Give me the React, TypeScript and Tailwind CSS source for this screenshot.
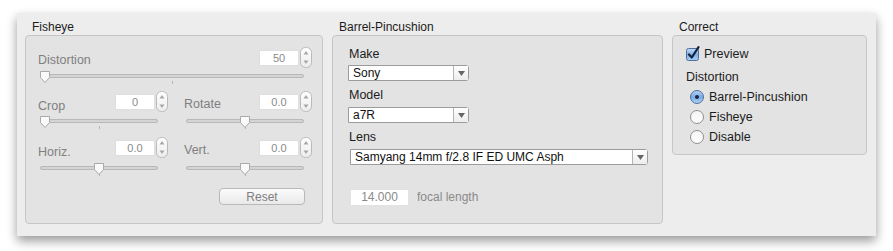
import type { ReactNode } from 'react'

const FONT = { fontFamily: '"Liberation Sans", Arial, sans-serif' }

function Group({ title, className, children }: { title: string; className: string; children: ReactNode }) {
  return (
    <div className="flex flex-col">
      <div className="h-[14px] pl-[7px] text-[12px] leading-[14px] text-[#1c1c1c]">{title}</div>
      <div className={`mt-[1px] rounded-[4px] border border-[#c6c6c6] bg-[#e3e3e3] ${className}`}>{children}</div>
    </div>
  )
}

function Stepper() {
  return (
    <svg width="12" height="21" viewBox="0 0 12 21" className="block">
      <defs>
        <linearGradient id="stp" x1="0" y1="0" x2="0" y2="1">
          <stop offset="0" stopColor="#ffffff" />
          <stop offset="1" stopColor="#ececec" />
        </linearGradient>
      </defs>
      <rect x="0.5" y="0.5" width="11" height="20" rx="5" fill="url(#stp)" stroke="#b9b9b9" />
      <path d="M3.5 7.5 L6 4 L8.5 7.5 Z" fill="#a8a8a8" />
      <path d="M3.5 13.5 L6 17 L8.5 13.5 Z" fill="#a8a8a8" />
    </svg>
  )
}

function NumField({ value }: { value: string }) {
  return (
    <div className="flex items-center gap-[1px]">
      <div className="h-[16px] w-[40px] border border-[#dedede] bg-white text-center text-[11px] leading-[14px] text-[#8a8a8a]">
        {value}
      </div>
      <Stepper />
    </div>
  )
}

function Knob() {
  return (
    <svg width="12" height="14" viewBox="0 0 12 14" className="block">
      <path d="M1.5 1.5 H10.5 V7.5 L6 12.5 L1.5 7.5 Z" fill="#fafafa" stroke="#a9a9a9" strokeLinejoin="round" />
    </svg>
  )
}

function Slider({ width, knob }: { width: number; knob: 'left' | 'center' }) {
  return (
    <div className="relative h-[16px]" style={{ width }}>
      <div className="absolute left-0 right-0 top-[4px] h-[4px] rounded-full border border-[#b8b8b8] bg-[#d4d4d4]" />
      <div className="absolute top-[11px] h-[3px] w-[1px] bg-[#b5b5b5]" style={{ left: Math.round(width / 2) }} />
      <div
        className="absolute top-0"
        style={{ left: knob === 'left' ? -1 : Math.round(width / 2) - 6 }}
      >
        <Knob />
      </div>
    </div>
  )
}

function Select({ value, width }: { value: string; width: number }) {
  return (
    <div
      className="flex h-[16px] items-stretch rounded-r-[3px] border border-[#9c9c9c] bg-white"
      style={{ width }}
    >
      <div className="flex-1 pl-[4px] text-[12px] leading-[14px] text-[#111]">{value}</div>
      <div className="flex w-[15px] items-center justify-center border-l border-[#b4b4b4] bg-gradient-to-b from-[#ffffff] to-[#ededed]">
        <svg width="7" height="5" viewBox="0 0 7 5">
          <path d="M0 0 H7 L3.5 5 Z" fill="#666" />
        </svg>
      </div>
    </div>
  )
}

function Checkbox() {
  return (
    <svg width="15" height="15" viewBox="0 0 15 15" className="block">
      <defs>
        <linearGradient id="cbx" x1="0" y1="0" x2="0" y2="1">
          <stop offset="0" stopColor="#c6dcf6" />
          <stop offset="0.5" stopColor="#7fb0e8" />
          <stop offset="1" stopColor="#a7cdf5" />
        </linearGradient>
      </defs>
      <rect x="0.5" y="2.5" width="12" height="12" rx="2" fill="url(#cbx)" stroke="#4f6f9c" />
      <path d="M3 8.5 L5.8 11.5 L12.5 1.2" fill="none" stroke="#15233f" strokeWidth="2.2" strokeLinecap="round" strokeLinejoin="round" />
    </svg>
  )
}

function Radio({ on }: { on: boolean }) {
  return (
    <svg width="14" height="14" viewBox="0 0 14 14" className="block">
      <defs>
        <linearGradient id="rOn" x1="0" y1="0" x2="0" y2="1">
          <stop offset="0" stopColor="#b9d4f4" />
          <stop offset="0.5" stopColor="#78abe6" />
          <stop offset="1" stopColor="#b2d3f7" />
        </linearGradient>
        <linearGradient id="rOff" x1="0" y1="0" x2="0" y2="1">
          <stop offset="0" stopColor="#f4f4f4" />
          <stop offset="1" stopColor="#ffffff" />
        </linearGradient>
      </defs>
      <circle cx="7" cy="7" r="6.5" fill={on ? 'url(#rOn)' : 'url(#rOff)'} stroke={on ? '#52709c' : '#8f8f8f'} />
      {on && <circle cx="7" cy="7" r="2" fill="#1b2540" />}
    </svg>
  )
}

export default function App() {
  return (
    <div className="h-[251px] w-[893px] bg-white pl-[17px] pt-[13px]" style={FONT}>
      <div className="flex h-[223px] w-[859px] gap-[9px] bg-[#ededed] pl-[8px] pt-[7px] shadow-[0_5px_10px_rgba(0,0,0,0.4)]">
        {/* Fisheye – disabled */}
        <Group title="Fisheye" className="h-[189px] w-[298px] pl-[12px] pt-[11px]">
          <div className="flex h-[21px] w-[274px] items-center justify-between">
            <span className="mt-[5px] text-[12.5px] text-[#7f7f7f]">Distortion</span>
            <NumField value="50" />
          </div>
          <div className="ml-[2px] mt-[2px]">
            <Slider width={264} knob="left" />
          </div>
          <div className="mt-[5px] flex gap-[16px]">
            <div className="flex w-[130px] flex-col">
              <div className="flex h-[21px] items-center justify-between">
                <span className="mt-[9px] text-[12.5px] text-[#7f7f7f]">Crop</span>
                <NumField value="0" />
              </div>
              <div className="ml-[2px] mt-[3px]">
                <Slider width={118} knob="left" />
              </div>
              <div className="mt-[6px] flex h-[21px] items-center justify-between">
                <span className="mt-[9px] text-[12.5px] text-[#7f7f7f]">Horiz.</span>
                <NumField value="0.0" />
              </div>
              <div className="ml-[2px] mt-[4px]">
                <Slider width={118} knob="center" />
              </div>
            </div>
            <div className="flex w-[128px] flex-col">
              <div className="flex h-[21px] items-center justify-between">
                <span className="mt-[6px] text-[12.5px] text-[#7f7f7f]">Rotate</span>
                <NumField value="0.0" />
              </div>
              <div className="ml-[2px] mt-[3px]">
                <Slider width={118} knob="center" />
              </div>
              <div className="mt-[6px] flex h-[21px] items-center justify-between">
                <span className="mt-[6px] text-[12.5px] text-[#7f7f7f]">Vert.</span>
                <NumField value="0.0" />
              </div>
              <div className="ml-[2px] mt-[4px]">
                <Slider width={118} knob="center" />
              </div>
              <div className="ml-[35px] mt-[10px] flex h-[17px] w-[86px] items-center justify-center rounded-[4px] border border-[#b9b9b9] bg-gradient-to-b from-[#fbfbfb] to-[#e9e9e9] text-[12px] text-[#808080]">
                Reset
              </div>
            </div>
          </div>
        </Group>

        {/* Barrel-Pincushion */}
        <Group title="Barrel-Pincushion" className="h-[189px] w-[331px] pl-[15px] pt-[11px]">
          <div className="h-[14px] pl-[1px] text-[12.5px] leading-[14px] text-[#1c1c1c]">Make</div>
          <div className="mt-[4px]">
            <Select value="Sony" width={121} />
          </div>
          <div className="mt-[7px] h-[14px] pl-[1px] text-[12.5px] leading-[14px] text-[#1c1c1c]">Model</div>
          <div className="mt-[5px]">
            <Select value="a7R" width={121} />
          </div>
          <div className="mt-[7px] h-[14px] pl-[1px] text-[12.5px] leading-[14px] text-[#1c1c1c]">Lens</div>
          <div className="ml-[2px] mt-[5px]">
            <Select value="Samyang 14mm f/2.8 IF ED UMC Asph" width={298} />
          </div>
          <div className="ml-[2px] mt-[23px] flex items-center gap-[8px]">
            <div className="h-[17px] w-[59px] border border-[#e2e2e2] bg-white text-center text-[12px] leading-[15px] text-[#8a8a8a]">
              14.000
            </div>
            <span className="text-[12px] text-[#8a8a8a]">focal length</span>
          </div>
        </Group>

        {/* Correct */}
        <Group title="Correct" className="h-[120px] w-[195px] pl-[13px] pt-[9px]">
          <div className="flex items-center gap-[3px]">
            <Checkbox />
            <span className="mt-[2px] text-[12.5px] leading-[14px] text-[#1c1c1c]">Preview</span>
          </div>
          <div className="mt-[9px] h-[14px] text-[12.5px] leading-[14px] text-[#1c1c1c]">Distortion</div>
          <div className="ml-[4px] mt-[6px] flex flex-col gap-[6px]">
            {[
              ['Barrel-Pincushion', true],
              ['Fisheye', false],
              ['Disable', false],
            ].map(([label, on]) => (
              <div key={label as string} className="flex h-[14px] items-center gap-[5px]">
                <Radio on={on as boolean} />
                <span className="text-[12.5px] leading-[14px] text-[#1c1c1c]">{label as string}</span>
              </div>
            ))}
          </div>
        </Group>
      </div>
    </div>
  )
}
